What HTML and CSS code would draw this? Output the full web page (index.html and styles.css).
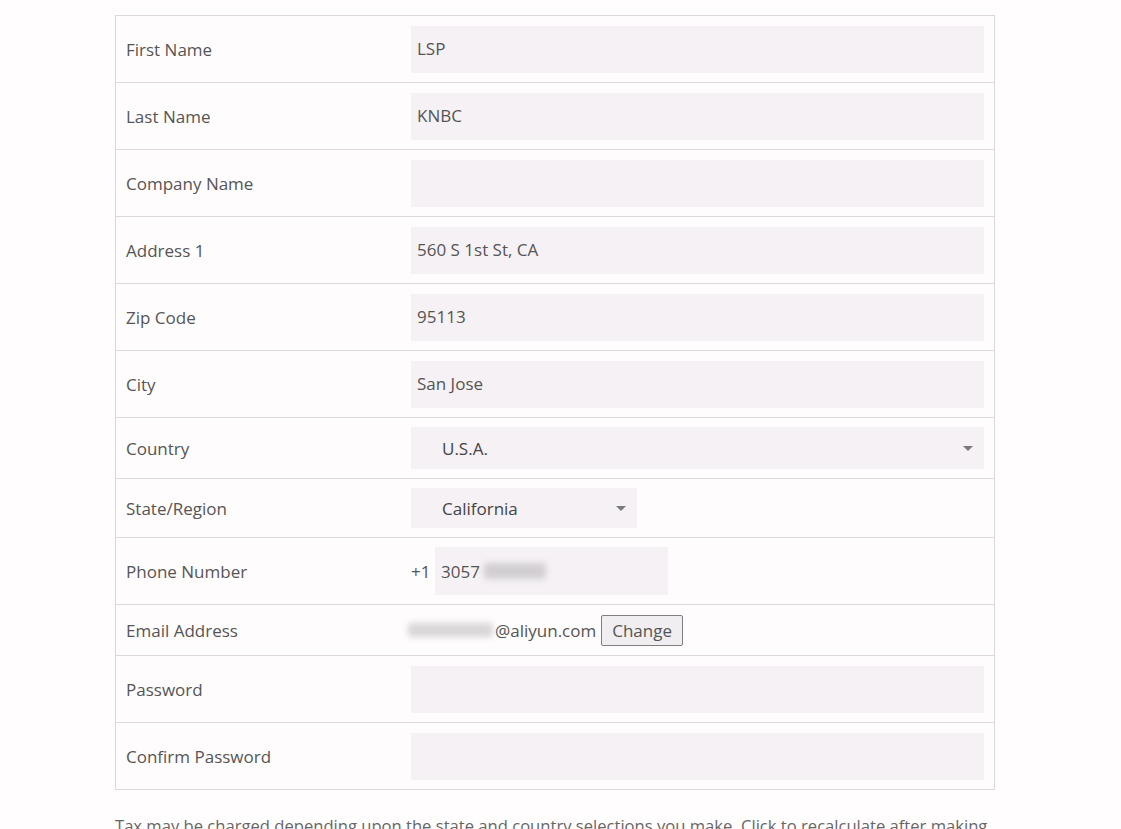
FILE: index.html
```html
<!DOCTYPE html>
<html lang="en">
<head>
<meta charset="utf-8">
<title>Account details</title>
<link rel="stylesheet" href="styles.css">
</head>
<body>
<div class="page">
  <div class="form">
    <div class="row"><div class="label">First Name</div><div class="field"><input class="text" type="text" value="LSP"></div></div>
    <div class="row"><div class="label">Last Name</div><div class="field"><input class="text" type="text" value="KNBC"></div></div>
    <div class="row"><div class="label">Company Name</div><div class="field"><input class="text" type="text" value=""></div></div>
    <div class="row"><div class="label">Address 1</div><div class="field"><input class="text" type="text" value="560 S 1st St, CA"></div></div>
    <div class="row"><div class="label">Zip Code</div><div class="field"><input class="text" type="text" value="95113"></div></div>
    <div class="row"><div class="label">City</div><div class="field"><input class="text" type="text" value="San Jose"></div></div>
    <div class="row row-country"><div class="label">Country</div><div class="field"><div class="select select-wide"><span class="select-value">U.S.A.</span><span class="arrow"></span></div></div></div>
    <div class="row row-state"><div class="label">State/Region</div><div class="field"><div class="select select-narrow"><span class="select-value">California</span><span class="arrow"></span></div></div></div>
    <div class="row"><div class="label">Phone Number</div><div class="field"><span class="prefix">+1</span><div class="phone-input"><span>3057</span><span class="blur blur-phone"></span></div></div></div>
    <div class="row row-email"><div class="label">Email Address</div><div class="field field-email"><span class="blur blur-email"></span><span class="email-domain">@aliyun.com</span><button class="change" type="button">Change</button></div></div>
    <div class="row"><div class="label">Password</div><div class="field"><input class="text" type="password" value=""></div></div>
    <div class="row"><div class="label">Confirm Password</div><div class="field"><input class="text" type="password" value=""></div></div>
  </div>
  <p class="note">Tax may be charged depending upon the state and country selections you make. Click to recalculate after making</p>
</div>
</body>
</html>
```
FILE: styles.css
```css
html, body {
  margin: 0;
  padding: 0;
  background: #fffdfe;
}
body {
  font-family: "Open Sans", "Liberation Sans", sans-serif;
  font-size: 17px;
  color: #555;
  overflow: hidden;
}
.page {
  width: 880px;
  margin-left: 115px;
  padding-top: 15px;
}
.form {
  border: 1px solid #dcd8dc;
  background: #fffcfe;
}
.row {
  display: grid;
  grid-template-columns: 285px 1fr;
  border-bottom: 1px solid #dcd8dc;
  height: 66px;
}
.row:last-child {
  border-bottom: none;
}
.row-country { height: 60px; }
.row-state { height: 58px; }
.row-email { height: 50px; }
.label {
  display: flex;
  align-items: center;
  padding-left: 10px;
  color: #555;
}
.field {
  display: flex;
  align-items: center;
  padding: 0 10px;
}
.text {
  width: 100%;
  height: 47px;
  box-sizing: border-box;
  border: none;
  outline: none;
  background: #f5f1f4;
  font-family: inherit;
  font-size: 17px;
  color: #555;
  padding: 0 6px 2px;
  margin-top: 1px;
}
.select {
  position: relative;
  display: flex;
  align-items: center;
  background: #f5f1f4;
  box-sizing: border-box;
  padding-left: 31px;
  color: #444;
}
.select-wide {
  width: 100%;
  height: 42px;
}
.select-narrow {
  width: 226px;
  height: 40px;
}
.arrow {
  position: absolute;
  right: 11px;
  top: 50%;
  margin-top: -2px;
  width: 0;
  height: 0;
  border-left: 5px solid transparent;
  border-right: 5px solid transparent;
  border-top: 5px solid #7a7a7a;
}
.prefix {
  width: 24px;
  color: #555;
}
.phone-input {
  width: 233px;
  height: 48px;
  box-sizing: border-box;
  background: #f5f1f4;
  display: flex;
  align-items: center;
  padding-left: 6px;
  color: #555;
}
.blur {
  display: inline-block;
  background: #c9c6c9;
  filter: blur(3px);
  border-radius: 3px;
}
.blur-phone {
  width: 62px;
  height: 16px;
  margin-left: 4px;
  opacity: 0.8;
}
.field-email {
  padding-left: 0;
}
.blur-email {
  width: 85px;
  height: 14px;
  margin-left: 7px;
  margin-right: 2px;
  opacity: 0.7;
}
.email-domain {
  color: #555;
  margin-right: 5px;
}
.change {
  font-family: inherit;
  font-size: 17px;
  color: #555;
  background: #f0eef0;
  border: 1px solid #7f7f7f;
  border-radius: 2px;
  height: 31px;
  padding: 0 10px 1px;
  margin-top: 1px;
}
.note {
  margin: 24px 0 0;
  color: #666;
  font-size: 16.6px;
  line-height: 24px;
  white-space: nowrap;
}
```
